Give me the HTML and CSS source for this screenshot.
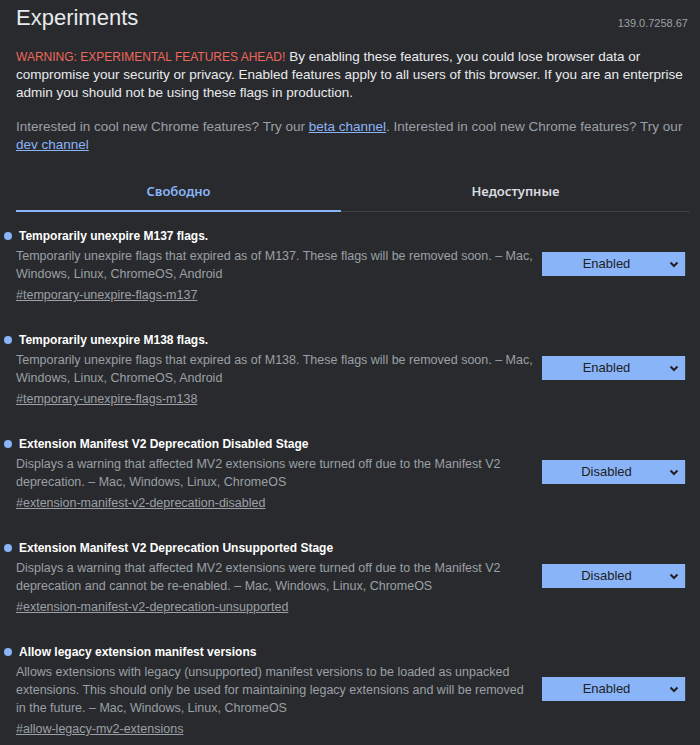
FILE: index.html
```html
<!DOCTYPE html>
<html lang="en">
<head>
<meta charset="utf-8">
<title>Experiments</title>
<link rel="stylesheet" href="styles.css">
</head>
<body>
<div class="page">
  <header class="header">
    <h1 class="title">Experiments</h1>
    <span class="version">139.0.7258.67</span>
  </header>
  <p class="warning"><span class="warning-lead">WARNING: EXPERIMENTAL FEATURES AHEAD!</span> By enabling these features, you could lose browser data or compromise your security or privacy. Enabled features apply to all users of this browser. If you are an enterprise admin you should not be using these flags in production.</p>
  <p class="channel">Interested in cool new Chrome features? Try our <a class="link" href="#">beta channel</a>. Interested in cool new Chrome features? Try our <a class="link" href="#">dev channel</a></p>

  <nav class="tabs">
    <div class="tab tab-active">Свободно</div>
    <div class="tab">Недоступные</div>
  </nav>

  <div class="flags">
    <div class="flag">
      <div class="flag-text">
        <div class="flag-name"><span class="dot"></span>Temporarily unexpire M137 flags.</div>
        <p class="flag-desc">Temporarily unexpire flags that expired as of M137. These flags will be removed soon. – Mac, Windows, Linux, ChromeOS, Android</p>
        <a class="flag-link" href="#">#temporary-unexpire-flags-m137</a>
      </div>
      <div class="select"><span>Enabled</span><svg class="chev" width="10" height="7" viewBox="0 0 10 7"><path d="M1.5 1.5 L5 5 L8.5 1.5" fill="none" stroke="#202124" stroke-width="2"/></svg></div>
    </div>

    <div class="flag">
      <div class="flag-text">
        <div class="flag-name"><span class="dot"></span>Temporarily unexpire M138 flags.</div>
        <p class="flag-desc">Temporarily unexpire flags that expired as of M138. These flags will be removed soon. – Mac, Windows, Linux, ChromeOS, Android</p>
        <a class="flag-link" href="#">#temporary-unexpire-flags-m138</a>
      </div>
      <div class="select"><span>Enabled</span><svg class="chev" width="10" height="7" viewBox="0 0 10 7"><path d="M1.5 1.5 L5 5 L8.5 1.5" fill="none" stroke="#202124" stroke-width="2"/></svg></div>
    </div>

    <div class="flag">
      <div class="flag-text">
        <div class="flag-name"><span class="dot"></span>Extension Manifest V2 Deprecation Disabled Stage</div>
        <p class="flag-desc">Displays a warning that affected MV2 extensions were turned off due to the Manifest V2 deprecation. – Mac, Windows, Linux, ChromeOS</p>
        <a class="flag-link" href="#">#extension-manifest-v2-deprecation-disabled</a>
      </div>
      <div class="select"><span>Disabled</span><svg class="chev" width="10" height="7" viewBox="0 0 10 7"><path d="M1.5 1.5 L5 5 L8.5 1.5" fill="none" stroke="#202124" stroke-width="2"/></svg></div>
    </div>

    <div class="flag">
      <div class="flag-text">
        <div class="flag-name"><span class="dot"></span>Extension Manifest V2 Deprecation Unsupported Stage</div>
        <p class="flag-desc">Displays a warning that affected MV2 extensions were turned off due to the Manifest V2 deprecation and cannot be re-enabled. – Mac, Windows, Linux, ChromeOS</p>
        <a class="flag-link" href="#">#extension-manifest-v2-deprecation-unsupported</a>
      </div>
      <div class="select"><span>Disabled</span><svg class="chev" width="10" height="7" viewBox="0 0 10 7"><path d="M1.5 1.5 L5 5 L8.5 1.5" fill="none" stroke="#202124" stroke-width="2"/></svg></div>
    </div>

    <div class="flag">
      <div class="flag-text">
        <div class="flag-name"><span class="dot"></span>Allow legacy extension manifest versions</div>
        <p class="flag-desc">Allows extensions with legacy (unsupported) manifest versions to be loaded as unpacked extensions. This should only be used for maintaining legacy extensions and will be removed in the future. – Mac, Windows, Linux, ChromeOS</p>
        <a class="flag-link" href="#">#allow-legacy-mv2-extensions</a>
      </div>
      <div class="select"><span>Enabled</span><svg class="chev" width="10" height="7" viewBox="0 0 10 7"><path d="M1.5 1.5 L5 5 L8.5 1.5" fill="none" stroke="#202124" stroke-width="2"/></svg></div>
    </div>
  </div>
</div>
</body>
</html>
```

FILE: styles.css
```css
html, body {
  margin: 0;
  padding: 0;
  background: #292a2d;
}
body {
  font-family: "Liberation Sans", Arial, sans-serif;
  font-size: 13px;
  line-height: 18px;
  color: #e8eaed;
  overflow: hidden;
}
.page {
  padding: 2px 10px 0 16px;
}
.header {
  display: flex;
  justify-content: space-between;
  align-items: center;
}
.title {
  margin: 0;
  font-size: 22px;
  line-height: 32px;
  font-weight: 400;
  color: #e8eaed;
}
.version {
  color: #9aa0a6;
  font-size: 11px;
  margin-top: 10px;
  margin-right: 2px;
}
.warning {
  margin: 14px 0 0;
  font-size: 13.5px;
  color: #e8eaed;
}
.warning-lead {
  color: #ee675c;
  font-size: 12px;
}
.channel {
  margin: 16px 0 0;
  font-size: 13.5px;
  color: #9aa0a6;
}
.link {
  color: #8ab4f8;
  text-decoration: underline;
}
.tabs {
  display: flex;
  margin-top: 16px;
  border-bottom: 1px solid #3c4043;
  width: 674px;
}
.tab {
  flex: 1;
  text-align: center;
  padding: 12px 0 11px;
  font-family: "Noto Sans", "Liberation Sans", sans-serif;
  font-weight: 600;
  color: #dadce0;
}
.tab-active {
  flex: 0 0 325px;
  color: #8ab4f8;
  padding-bottom: 10px;
  border-bottom: 2px solid #8ab4f8;
  margin-bottom: -1px;
}
.flags {
  margin-top: 15px;
  display: flex;
  flex-direction: column;
  gap: 27px;
}
.flag {
  display: flex;
  align-items: center;
  gap: 9px;
}
.flag-text {
  width: 517px;
}
.flag-name {
  font-size: 12px;
  font-weight: 700;
  color: #ffffff;
  display: flex;
  align-items: center;
}
.dot {
  width: 8px;
  height: 8px;
  border-radius: 50%;
  background: #8ab4f8;
  margin-left: -12px;
  margin-right: 7px;
  flex: none;
}
.flag-desc {
  margin: 2px 0 3px;
  font-size: 12.5px;
  color: #9aa0a6;
}
.flag-link {
  font-size: 12.5px;
  color: #9aa0a6;
  text-decoration: underline;
}
.select {
  width: 144px;
  height: 24px;
  box-sizing: border-box;
  background: #8ab4f8;
  color: #202124;
  border-right: 1px solid #3c4043;
  display: flex;
  align-items: center;
  justify-content: center;
  position: relative;
  padding-right: 14px;
  margin-bottom: 4px;
}
.chev {
  position: absolute;
  right: 6px;
  top: 9px;
}
```
